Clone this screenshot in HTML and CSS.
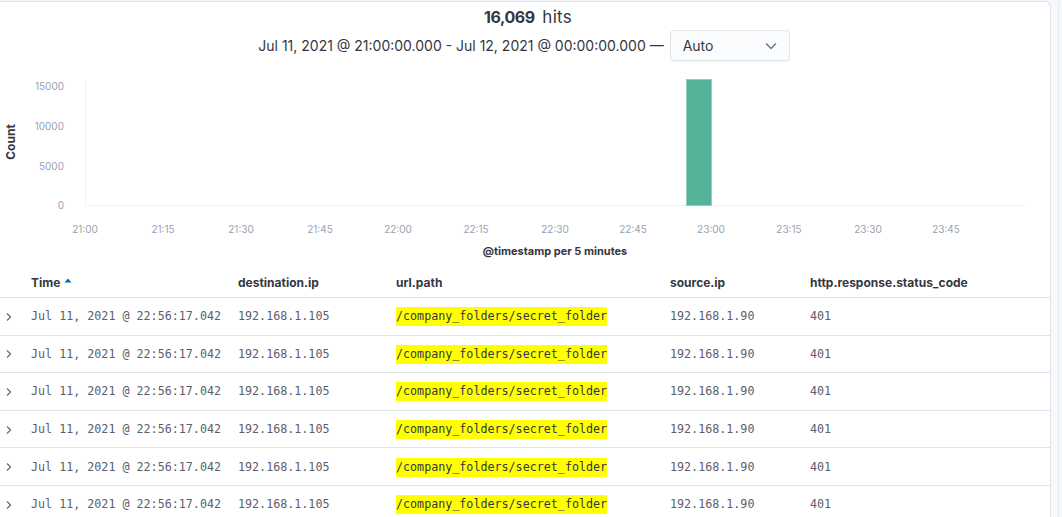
FILE: index.html
```html
<!DOCTYPE html>
<html>
<head>
<meta charset="utf-8">
<link rel="stylesheet" href="styles.css">
</head>
<body>
<div class="page">
  <div class="panel">
    <div class="summary">
      <div class="hits"><strong>16,069</strong> <span class="hits-label">hits</span></div>
      <div class="range">
        <span class="range-text">Jul 11, 2021 @ 21:00:00.000 - Jul 12, 2021 @ 00:00:00.000 —</span>
        <div class="select">
          <span>Auto</span>
          <svg class="select-caret" width="12" height="8" viewBox="0 0 12 8"><path d="M1 1.5 L6 6.5 L11 1.5" fill="none" stroke="#69707d" stroke-width="1.3"/></svg>
        </div>
      </div>
    </div>
    <div class="chart">
      <svg width="1050" height="202" viewBox="0 0 1050 202">
        <g class="grid">
          <line x1="85.5" y1="18" x2="85.5" y2="143" />
          <line x1="85" y1="143.5" x2="1025" y2="143.5" />
        </g>
        <g class="ytick" text-anchor="end">
          <text x="64" y="28">15000</text>
          <text x="64" y="68">10000</text>
          <text x="64" y="108">5000</text>
          <text x="64" y="147">0</text>
        </g>
        <text class="axis-title count" transform="translate(15 80) rotate(-90)" text-anchor="middle">Count</text>
        <rect class="bar" x="686.5" y="17.5" width="25" height="126" />
        <g class="xtick" text-anchor="middle">
          <text x="85" y="171">21:00</text>
          <text x="163" y="171">21:15</text>
          <text x="241" y="171">21:30</text>
          <text x="320" y="171">21:45</text>
          <text x="398" y="171">22:00</text>
          <text x="476" y="171">22:15</text>
          <text x="555" y="171">22:30</text>
          <text x="633" y="171">22:45</text>
          <text x="711" y="171">23:00</text>
          <text x="789" y="171">23:15</text>
          <text x="868" y="171">23:30</text>
          <text x="946" y="171">23:45</text>
        </g>
        <text class="axis-title" x="555" y="193" text-anchor="middle">@timestamp per 5 minutes</text>
      </svg>
    </div>
    <div class="table">
      <div class="row head">
        <div></div>
        <div class="th">Time <svg class="sort" width="8" height="5" viewBox="0 0 8 5"><path d="M0.5 4.5 L4 0.5 L7.5 4.5 Z" fill="#006bb4"/></svg></div>
        <div class="th">destination.ip</div>
        <div class="th">url.path</div>
        <div class="th">source.ip</div>
        <div class="th">http.response.status_code</div>
      </div>
      <div class="row">
        <div class="chev"><svg width="8" height="10" viewBox="0 0 8 10"><path d="M2 1.5 L5.5 5 L2 8.5" fill="none" stroke="#69707d" stroke-width="1.3"/></svg></div>
        <div class="td">Jul 11, 2021 @ 22:56:17.042</div>
        <div class="td">192.168.1.105</div>
        <div class="td"><mark>/company_folders/secret_folder</mark></div>
        <div class="td">192.168.1.90</div>
        <div class="td">401</div>
      </div>
      <div class="row">
        <div class="chev"><svg width="8" height="10" viewBox="0 0 8 10"><path d="M2 1.5 L5.5 5 L2 8.5" fill="none" stroke="#69707d" stroke-width="1.3"/></svg></div>
        <div class="td">Jul 11, 2021 @ 22:56:17.042</div>
        <div class="td">192.168.1.105</div>
        <div class="td"><mark>/company_folders/secret_folder</mark></div>
        <div class="td">192.168.1.90</div>
        <div class="td">401</div>
      </div>
      <div class="row">
        <div class="chev"><svg width="8" height="10" viewBox="0 0 8 10"><path d="M2 1.5 L5.5 5 L2 8.5" fill="none" stroke="#69707d" stroke-width="1.3"/></svg></div>
        <div class="td">Jul 11, 2021 @ 22:56:17.042</div>
        <div class="td">192.168.1.105</div>
        <div class="td"><mark>/company_folders/secret_folder</mark></div>
        <div class="td">192.168.1.90</div>
        <div class="td">401</div>
      </div>
      <div class="row">
        <div class="chev"><svg width="8" height="10" viewBox="0 0 8 10"><path d="M2 1.5 L5.5 5 L2 8.5" fill="none" stroke="#69707d" stroke-width="1.3"/></svg></div>
        <div class="td">Jul 11, 2021 @ 22:56:17.042</div>
        <div class="td">192.168.1.105</div>
        <div class="td"><mark>/company_folders/secret_folder</mark></div>
        <div class="td">192.168.1.90</div>
        <div class="td">401</div>
      </div>
      <div class="row">
        <div class="chev"><svg width="8" height="10" viewBox="0 0 8 10"><path d="M2 1.5 L5.5 5 L2 8.5" fill="none" stroke="#69707d" stroke-width="1.3"/></svg></div>
        <div class="td">Jul 11, 2021 @ 22:56:17.042</div>
        <div class="td">192.168.1.105</div>
        <div class="td"><mark>/company_folders/secret_folder</mark></div>
        <div class="td">192.168.1.90</div>
        <div class="td">401</div>
      </div>
      <div class="row">
        <div class="chev"><svg width="8" height="10" viewBox="0 0 8 10"><path d="M2 1.5 L5.5 5 L2 8.5" fill="none" stroke="#69707d" stroke-width="1.3"/></svg></div>
        <div class="td">Jul 11, 2021 @ 22:56:17.042</div>
        <div class="td">192.168.1.105</div>
        <div class="td"><mark>/company_folders/secret_folder</mark></div>
        <div class="td">192.168.1.90</div>
        <div class="td">401</div>
      </div>
    </div>
  </div>
  <div class="gutter"><div class="track"></div></div>
</div>
</body>
</html>
```
FILE: styles.css
```css
* { box-sizing: border-box; }
html, body {
  margin: 0;
  height: 100%;
  overflow: hidden;
  background: #ffffff;
  font-family: Inter, "Noto Sans", sans-serif;
  color: #343741;
}
.page {
  display: flex;
  height: 100%;
  padding-top: 1px;
  background: #f7f8fb;
}
.panel {
  width: 1052px;
  margin-left: -1px;
  background: #ffffff;
  border: 1px solid #dfe3ea;
  border-bottom: none;
  border-radius: 0 6px 0 0;
  flex: none;
}
.gutter {
  flex: 1;
  display: flex;
  justify-content: flex-end;
  padding-right: 3px;
}
.track {
  width: 1px;
  background: #e9ecf1;
}
.summary {
  display: flex;
  flex-direction: column;
  align-items: center;
  padding-top: 5px;
}
.hits {
  font-size: 16px;
  line-height: 20px;
  word-spacing: 3px;
  margin-left: 6px;
}
.hits strong { font-weight: 700; letter-spacing: -0.4px; }
.hits-label { font-size: 17px; letter-spacing: 0.3px; }
.range {
  margin-top: 3px;
  display: flex;
  align-items: center;
  gap: 6px;
  margin-left: -2px;
}
.range-text {
  font-size: 14px;
  letter-spacing: 0;
}
.select {
  width: 120px;
  height: 31px;
  border: 1px solid #e0e4eb;
  border-radius: 4px;
  background: #fbfcfd;
  box-shadow: 0 1px 2px rgba(0,0,0,0.05);
  display: flex;
  align-items: center;
  justify-content: space-between;
  padding: 0 12px 0 12px;
  font-size: 14px;
}
.select-caret { display: block; }
.chart {
  height: 202px;
  margin-top: 1px;
}
.chart svg { display: block; }
.grid line {
  stroke: #eef0f4;
  stroke-width: 1;
}
.ytick text, .xtick text {
  font-family: Inter, sans-serif;
  font-size: 10px;
  fill: #98a2b3;
}
.axis-title {
  font-family: Inter, sans-serif;
  font-size: 11px;
  font-weight: 700;
  fill: #343741;
}
.axis-title.count { font-size: 12px; }
.bar {
  fill: #54b399;
  stroke: #8fd1bd;
  stroke-width: 1;
}
.table { display: flex; flex-direction: column; }
.row {
  display: grid;
  grid-template-columns: 31px 207px 158px 274px 140px 1fr;
  align-items: center;
  height: 37.6px;
  border-bottom: 1px solid #dfe3ea;
}
.row.head {
  height: 34px;
}
.th {
  font-size: 12px;
  font-weight: 700;
  color: #343741;
  display: flex;
  align-items: center;
  gap: 4px;
  padding-top: 3px;
}
.sort { display: block; margin-top: -3px; }
.chev {
  display: flex;
  align-items: center;
  padding-left: 5px;
  padding-top: 1px;
}
.chev svg { display: block; }
.td {
  font-family: "DejaVu Sans Mono", "Liberation Mono", monospace;
  font-size: 11.7px;
  color: #5a606d;
  white-space: nowrap;
  padding-top: 0;
}
mark {
  background: #ffff00;
  color: #343741;
  padding: 2px 0 3px;
}
```
